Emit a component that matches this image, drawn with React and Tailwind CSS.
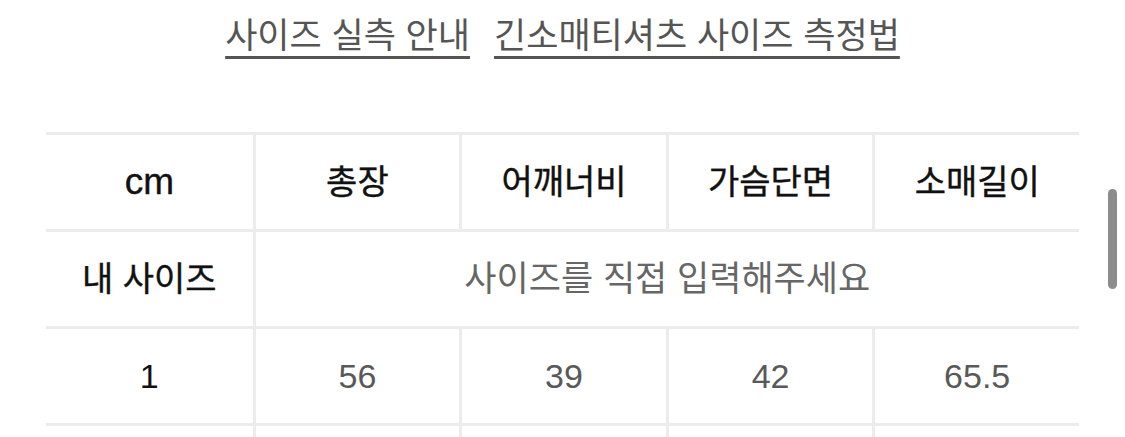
const FONT = "font-['Liberation_Sans','Noto_Sans_CJK_KR',sans-serif]";

const HEADERS = ['cm', '총장', '어깨너비', '가슴단면', '소매길이'];
const ROWS = [['1', '56', '39', '42', '65.5']];

function Cell({ children, first, className = '' }) {
  return (
    <div
      className={[
        'h-[94px] flex items-center justify-center',
        first ? '' : 'border-l-[3px] border-[#ececec]',
        className,
      ].join(' ')}
    >
      {children}
    </div>
  );
}

export default function App() {
  return (
    <div className={`relative h-[437px] overflow-hidden bg-white ${FONT}`}>
      {/* Guide links */}
      <div className="flex justify-center gap-6 pt-[14px] text-[35px] leading-[44px] text-[#555]">
        <span className="underline decoration-[3px] underline-offset-[8px] decoration-[#555]">사이즈 실측 안내</span>
        <span className="underline decoration-[3px] underline-offset-[8px] decoration-[#555]">긴소매티셔츠 사이즈 측정법</span>
      </div>

      {/* Size table */}
      <div className="mx-[46px] mt-[74px] text-[34px]">
        <div className="grid grid-cols-5 border-t-[3px] border-[#ececec] text-[#111] [-webkit-text-stroke:0.4px_#111]">
          {HEADERS.map((h, i) => (
            <Cell key={h} first={i === 0} className={i === 0 ? 'text-[37px]' : ''}>{h}</Cell>
          ))}
        </div>

        <div className="grid grid-cols-5 border-t-[3px] border-[#ececec]">
          <Cell first className="text-[#111] [-webkit-text-stroke:0.4px_#111]">내 사이즈</Cell>
          <Cell className="col-span-4 text-[35px] text-[#666]">사이즈를 직접 입력해주세요</Cell>
        </div>

        {ROWS.map(row => (
          <div key={row[0]} className="grid grid-cols-5 border-t-[3px] border-[#ececec]">
            {row.map((v, i) => (
              <Cell key={i} first={i === 0} className={i === 0 ? 'text-[#111]' : 'text-[#595959]'}>
                {v}
              </Cell>
            ))}
          </div>
        ))}

        {/* next row, only its top edge is in view */}
        <div className="grid grid-cols-5 border-t-[3px] border-[#ececec]">
          {[0, 1, 2, 3, 4].map(i => (
            <Cell key={i} first={i === 0} />
          ))}
        </div>
      </div>

      {/* Scroll indicator */}
      <div className="absolute left-[1108px] top-[189px] w-[9px] h-[100px] rounded-full bg-[#8c8c8c]" />
    </div>
  );
}
